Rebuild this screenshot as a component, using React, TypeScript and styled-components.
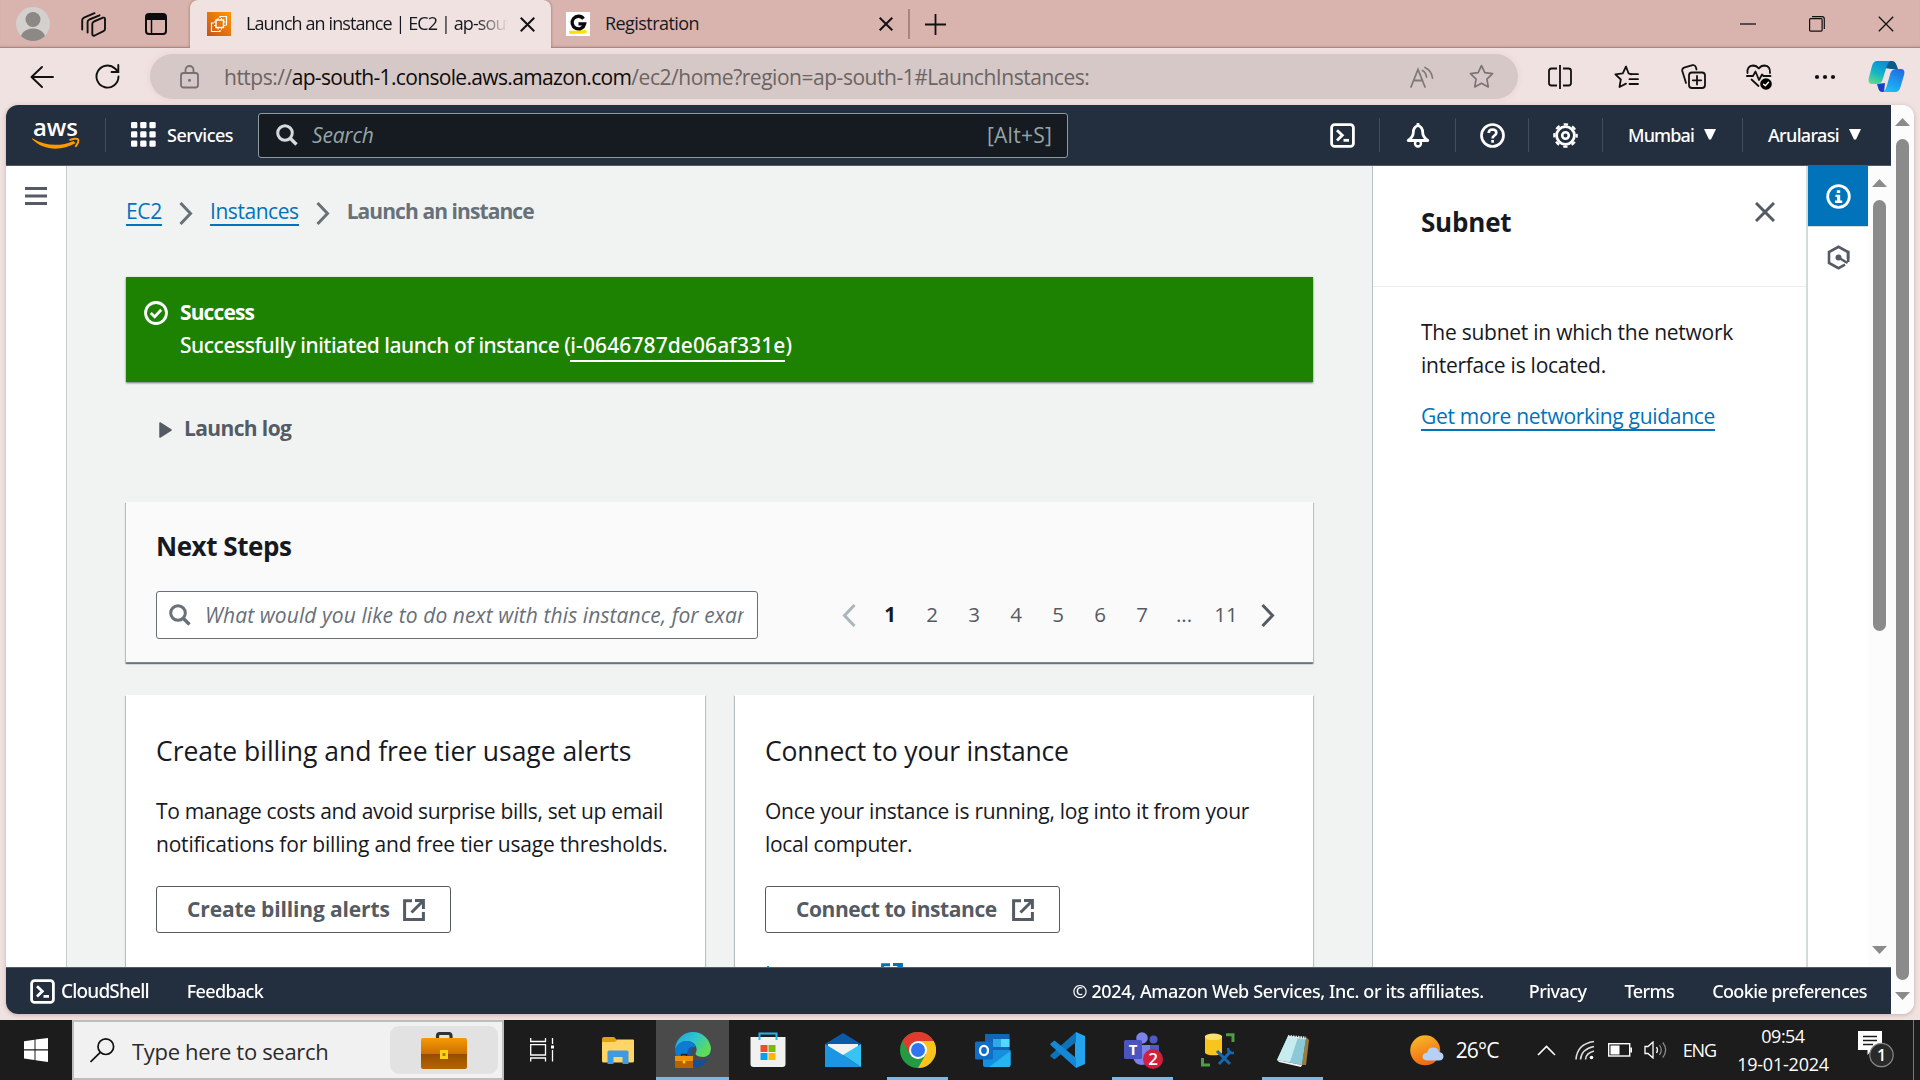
import React from 'react';
import styled, { createGlobalStyle, css } from 'styled-components';

const GlobalStyle = createGlobalStyle`
  * { box-sizing: border-box; }
  html, body { margin: 0; padding: 0; overflow: hidden; }
  body { font-family: 'Open Sans', 'Noto Sans', sans-serif; color: #16191f; }
  svg { display: block; flex: none; }
`;

/* ---------- shared ---------- */

const Text = styled.span<{ $size?: number; $ls?: number }>`
  white-space: nowrap;
  font-size: ${p => p.$size ?? 21}px;
  letter-spacing: ${p => p.$ls ?? 0}px;
`;
const Medium = styled(Text)`
  font-family: 'Noto Sans', sans-serif;
  font-weight: 500;
`;
const Bold = styled(Text)`
  font-weight: 700;
`;
const Spacer = styled.div`
  flex: 1;
`;

const Screen = styled.div`
  width: 1920px;
  height: 1080px;
  display: flex;
  flex-direction: column;
  background: #f0e2e0;
  overflow: hidden;
`;

/* ---------- browser tabs ---------- */

const TabStrip = styled.div`
  height: 48px;
  flex: none;
  display: flex;
  align-items: stretch;
  background: #d9b3ad;
  box-shadow: inset 0 -1px 0 #ab8783, inset 0 -3px 2px -1px #c9a19c;
`;
const StripTools = styled.div`
  width: 190px;
  padding-left: 16px;
  display: flex;
  align-items: center;
`;
const Avatar = styled.div`
  width: 34px;
  height: 34px;
  margin-right: 31px;
  border-radius: 50%;
  overflow: hidden;
  background: #d3d0cd;
`;
const PaneIcon = styled.div`
  margin-left: 39px;
`;
const Tab = styled.div<{ $active?: boolean }>`
  width: ${p => (p.$active ? 361 : 357)}px;
  padding: 0 ${p => (p.$active ? 16 : 15)}px 0 ${p => (p.$active ? 17 : 15)}px;
  display: flex;
  align-items: center;
  ${p => p.$active && css`
    background: #f0e2e0;
    border-radius: 8px 8px 0 0;
    box-shadow: 0 0 3px #8d6e6a;
    clip-path: inset(-4px -4px 0 -4px);
  `}
`;
const TabTitle = styled.div<{ $fade?: boolean }>`
  flex: 1;
  margin: 0 12px 2px 15px;
  overflow: hidden;
  line-height: 26px;
  ${p => p.$fade && css`mask-image: linear-gradient(90deg, #000 88%, transparent 100%);`}
`;
const TabDivider = styled.div`
  width: 2px;
  height: 30px;
  align-self: center;
  background: #a88480;
`;
const NewTab = styled.div`
  padding-left: 15px;
  display: flex;
  align-items: center;
`;
const WindowButton = styled.div`
  width: 69px;
  display: flex;
  align-items: center;
  justify-content: center;
`;

/* ---------- address bar ---------- */

const Toolbar = styled.div`
  height: 57px;
  flex: none;
  display: flex;
  align-items: center;
  padding: 0 13px 0 30px;
`;
const AddressBar = styled.div`
  width: 1368px;
  height: 45px;
  margin-left: 30px;
  padding: 0 10px 0 30px;
  display: flex;
  align-items: center;
  border-radius: 23px;
  background: #d6c8c6;
  box-shadow: 0 0 5px 2px #eadad8;
`;
const Url = styled.div`
  margin-left: 25px;
  flex: 1;
  display: flex;
  color: #6a6463;
`;
const Host = styled(Text)`
  color: #0d0b0b;
`;
const BarIcon = styled.div<{ $w: number }>`
  width: ${p => p.$w}px;
  display: flex;
  justify-content: center;
`;

/* ---------- page ---------- */

const PageFrame = styled.div`
  height: 909px;
  flex: none;
  margin: 0 6px;
  display: flex;
  border-radius: 12px;
  overflow: hidden;
  background: #fcfcfc;
`;
const FrameShadow = styled.div`
  flex: none;
  margin-bottom: 6px;
  filter: drop-shadow(0 1px 2px rgba(120, 80, 80, 0.35));
`;
const Page = styled.div`
  width: 1885px;
  display: flex;
  flex-direction: column;
`;
const ScrollTrack = styled.div<{ $pt: number; $pb: number }>`
  width: 23px;
  padding: ${p => p.$pt}px 0 ${p => p.$pb}px;
  display: flex;
  flex-direction: column;
  align-items: center;
  background: #fcfcfc;
`;
const ScrollThumb = styled.div<{ $h: number }>`
  width: 13px;
  height: ${p => p.$h}px;
  margin-top: 13px;
  border-radius: 7px;
  background: #8b8b8b;
`;

const Header = styled.div`
  height: 61px;
  flex: none;
  display: flex;
  align-items: center;
  background: #232f3e;
  border-bottom: 1px solid #545b64;
  color: #fff;
`;
const LogoCell = styled.div`
  width: 99px;
  padding: 0 0 1px 26px;
`;
const HDivider = styled.div`
  width: 1px;
  height: 34px;
  background: #414d5c;
`;
const ServicesCell = styled.div`
  width: 152px;
  padding: 0 0 1px 25px;
  display: flex;
  align-items: center;
  gap: 11px;
`;
const SearchBox = styled.div`
  width: 810px;
  height: 45px;
  padding: 0 15px 0 17px;
  display: flex;
  align-items: center;
  justify-content: space-between;
  border: 1px solid #8d9ba0;
  border-radius: 3px;
  background: #161a21;
  color: #95a5a6;
`;
const SearchHint = styled.div`
  display: flex;
  align-items: center;
  gap: 14px;
  font-style: italic;
`;
const ToolCell = styled.div<{ $w: number }>`
  width: ${p => p.$w}px;
  display: flex;
  justify-content: center;
`;
const MenuCell = styled.div<{ $w: number }>`
  width: ${p => p.$w}px;
  padding: 0 0 1px 25px;
  display: flex;
  align-items: center;
  gap: 10px;
`;

const Middle = styled.div`
  flex: 1;
  min-height: 0;
  display: flex;
`;
const LeftRail = styled.div`
  width: 61px;
  padding: 21px 0 0 19px;
  background: #fff;
  border-right: 1px solid #c3cbcb;
`;
const Content = styled.div`
  width: 1305px;
  padding: 0 59px;
  overflow: hidden;
  background: #f1f3f3;
  display: flex;
  flex-direction: column;
`;
const Breadcrumb = styled.div`
  height: 111px;
  flex: none;
  padding-top: 31px;
  display: flex;
  align-items: flex-start;
  color: #687078;
`;
const Link = styled(Text)`
  color: #0073bb;
  height: 29px;
  line-height: 28px;
  border-bottom: 2px solid #0073bb;
`;
const Crumb = styled(Bold)`
  line-height: 28px;
`;
const ChevronBox = styled.div`
  margin: 5px 17px 0 17px;
`;
const Alert = styled.div`
  height: 105px;
  flex: none;
  padding: 19px 18px;
  display: flex;
  gap: 12px;
  color: #fff;
  background: #1d8102;
  box-shadow: 0 1px 2px rgba(0, 28, 36, 0.6);
`;
const AlertIcon = styled.div`
  padding-top: 5px;
`;
const AlertBody = styled.div`
  display: flex;
  flex-direction: column;
`;
const AlertLine = styled.div`
  line-height: 33px;
  height: 33px;
  display: flex;
`;
const AlertLink = styled(Medium)`
  line-height: 28px;
  height: 31px;
  margin-top: 2px;
  padding-bottom: 1px;
  border-bottom: 2px solid #fff;
`;
const LaunchLog = styled.div`
  height: 120px;
  flex: none;
  padding: 31px 0 0 33px;
  display: flex;
  gap: 12px;
  line-height: 30px;
  color: #545b64;
`;
const LogTriangle = styled.div`
  padding-top: 9px;
`;
const panelShadow = css`
  box-shadow: 0 1px 1px rgba(0, 28, 36, 0.35), 1px 1px 1px rgba(0, 28, 36, 0.18), -1px 1px 1px rgba(0, 28, 36, 0.2);
`;
const NextSteps = styled.div`
  height: 161px;
  flex: none;
  padding: 26px 30px 0;
  background: #fafafa;
  border-bottom: 1px solid #7f8c8d;
  ${panelShadow}
`;
const SectionTitle = styled.div`
  height: 63px;
  line-height: 36px;
`;
const FilterRow = styled.div`
  display: flex;
  align-items: center;
  justify-content: space-between;
`;
const FilterInput = styled.div`
  width: 602px;
  height: 48px;
  padding: 0 13px 0 12px;
  display: flex;
  align-items: center;
  gap: 14px;
  border: 1px solid #687078;
  border-radius: 3px;
  background: #fff;
  color: #687078;
  font-style: italic;
`;
const Clip = styled.div`
  flex: 1;
  overflow: hidden;
  white-space: nowrap;
`;
const Pagination = styled.div`
  display: flex;
  align-items: center;
  margin-right: 8px;
  color: #545b64;
`;
const PageList = styled.div`
  display: flex;
  margin: 0 14px 0 13px;
`;
const PageNumber = styled.div<{ $current?: boolean }>`
  width: 42px;
  text-align: center;
  font-size: 20.5px;
  padding-bottom: 2px;
  ${p => p.$current && css`font-weight: 700; color: #16191f;`}
`;
const Cards = styled.div`
  margin-top: 32px;
  flex: none;
  height: 400px;
  display: grid;
  grid-template-columns: 579px 578px;
  gap: 30px;
`;
const Card = styled.div`
  padding: 38px 30px 0;
  background: #fff;
  ${panelShadow}
`;
const CardTitle = styled.div`
  height: 62px;
  line-height: 36px;
`;
const CardLine = styled.div`
  height: 33px;
  line-height: 33px;
`;
const OutlineButton = styled.div`
  width: 295px;
  height: 47px;
  margin-top: 25px;
  padding: 0 25px 2px 30px;
  display: flex;
  align-items: center;
  justify-content: space-between;
  border: 1px solid #545b64;
  border-radius: 3px;
  color: #545b64;
`;
const ButtonIcon = styled.div`
  padding-top: 2px;
`;
const LearnMore = styled.div`
  margin-top: 25px;
  display: flex;
  gap: 6px;
  line-height: 33px;
  color: #0073bb;
`;
const LearnIcon = styled.div`
  padding-top: 5px;
`;

const HelpPanel = styled.div`
  width: 436px;
  background: #fff;
  border-left: 1px solid #b8c2c2;
  border-right: 2px solid #d5dbdb;
`;
const HelpHeader = styled.div`
  height: 121px;
  padding: 36px 31px 0 48px;
  display: flex;
  align-items: flex-start;
  justify-content: space-between;
  border-bottom: 1px solid #eaeded;
  line-height: 41px;
`;
const HelpBody = styled.div`
  padding: 29px 0 0 48px;
`;
const HelpLine = styled.div`
  display: flex;
  height: 33px;
  line-height: 33px;
`;
const HelpLink = styled.div`
  margin-top: 20px;
  display: flex;
`;
const IconRail = styled.div`
  width: 60px;
  background: #fff;
`;
const RailTile = styled.div<{ $active?: boolean }>`
  height: 61px;
  display: flex;
  align-items: center;
  justify-content: center;
  border-bottom: 1px solid ${p => (p.$active ? '#d5dbdb' : 'transparent')};
  background: ${p => (p.$active ? '#0073bb' : '#fff')};
`;

const Footer = styled.div`
  height: 47px;
  flex: none;
  padding: 0 24px;
  display: flex;
  align-items: center;
  color: #fff;
  background: #232f3e;
  border-top: 1px solid #545b64;
`;
const FootItem = styled.div<{ $ml: number }>`
  margin-left: ${p => p.$ml}px;
  padding-bottom: 1px;
  display: flex;
  align-items: center;
`;

/* ---------- taskbar ---------- */

const Taskbar = styled.div`
  height: 60px;
  flex: none;
  display: flex;
  align-items: center;
  background: #1c1c1c;
  color: #fff;
`;
const StartButton = styled.div`
  width: 72px;
  display: flex;
  justify-content: center;
`;
const TaskSearch = styled.div`
  width: 432px;
  height: 60px;
  margin-right: 1px;
  padding: 0 4px 0 16px;
  display: flex;
  align-items: center;
  border: 2px solid #bdbdbd;
  background: #f1f1f1;
  color: #2b2b2b;
`;
const TaskSearchText = styled.div`
  flex: 1;
  padding: 2px 0 0 17px;
`;
const SearchPill = styled.div`
  width: 108px;
  height: 48px;
  display: flex;
  justify-content: center;
  align-items: center;
  border-radius: 9px;
  background: #e2e2e2;
`;
const AppSlot = styled.div<{ $active?: boolean; $open?: boolean }>`
  width: 73px;
  height: 60px;
  margin: 0 1px;
  display: flex;
  align-items: center;
  justify-content: center;
  background-color: ${p => (p.$active ? '#4a4a4a' : 'transparent')};
  ${p => p.$open && css`
    background-image: linear-gradient(#76b9ed, #76b9ed);
    background-repeat: no-repeat;
    background-position: bottom center;
    background-size: ${p.$active ? '100%' : '61px'} 3px;
  `}
`;
const TrayItem = styled.div<{ $ml: number }>`
  margin-left: ${p => p.$ml}px;
`;
const Clock = styled.div`
  width: 112px;
  margin-left: 11px;
  display: flex;
  flex-direction: column;
  align-items: center;
  line-height: 28px;
`;
const ShowDesktop = styled.div`
  width: 7px;
  height: 60px;
  border-left: 1px solid #777;
`;

/* ---------- icons ---------- */

const Cross = ({ s, w, c }: { s: number; w: number; c: string }) => (
  <svg width={s} height={s} viewBox="0 0 20 20"><path d="M1 1L19 19M19 1L1 19" stroke={c} strokeWidth={(w * 20) / s} fill="none" /></svg>
);
const Chevron = ({ c, left, w = 3 }: { c: string; left?: boolean; w?: number }) => (
  <svg width="14" height="23" viewBox="0 0 14 23"><path d={left ? 'M12.5 1L2.5 11.5L12.5 22' : 'M1.5 1L11.5 11.5L1.5 22'} fill="none" stroke={c} strokeWidth={w} /></svg>
);
const Arrow = ({ up }: { up?: boolean }) => (
  <svg width="15" height="8" viewBox="0 0 15 8"><path d={up ? 'M0 8L7.5 0L15 8Z' : 'M0 0L7.5 8L15 0Z'} fill="#8b8b8b" /></svg>
);
const Magnifier = ({ c }: { c: string }) => (
  <svg width="22" height="22" viewBox="0 0 22 22" fill="none" stroke={c}><circle cx="9" cy="9" r="7.3" strokeWidth="3" /><path d="M14.2 14.2L20.5 20.5" strokeWidth="3.4" /></svg>
);
const Caret = () => (
  <svg width="12" height="11" viewBox="0 0 12 11"><path d="M0 0H12L7 10.5H5Z" fill="#fff" /></svg>
);
const Shell = () => (
  <svg width="25" height="25" viewBox="0 0 25 25" fill="none" stroke="#fff" strokeWidth="2.8"><rect x="1.6" y="1.6" width="21.8" height="21.8" rx="3" /><path d="M7 7.2L12.3 12.3L7 17.4" /><path d="M13.5 17.3H19" /></svg>
);
const External = ({ c }: { c: string }) => (
  <svg width="22" height="22" viewBox="0 0 22 22" fill="none" stroke={c} strokeWidth="3"><path d="M9 1.7H1.6V20.4H20.4V13" /><path d="M12 1.6H20.4V10" /><path d="M20 2L8.5 13.5" /></svg>
);
const AwsLogo = () => (
  <svg width="48" height="32" viewBox="0 0 48 32">
    <text x="1" y="16.5" fontFamily="Open Sans" fontWeight="600" fontSize="24" textLength="45" lengthAdjust="spacingAndGlyphs" fill="#fff">aws</text>
    <path d="M.3 19.200C13 27 28 28 41.500 22L43.500 24.200C29 32.500 11 31.500 0 20Z" fill="#f90" />
    <path d="M37.500 21.200C41 19.600 45 19.300 46 20.200C47 21.400 46 25 43.300 27.800" fill="none" stroke="#f90" strokeWidth="2" />
  </svg>
);
const Profile = () => (
  <svg width="34" height="34" viewBox="0 0 34 34"><circle cx="17" cy="12.500" r="7.500" fill="#8c8885" /><ellipse cx="17" cy="32" rx="12.500" ry="10.500" fill="#8c8885" /></svg>
);
const Workspaces = () => (
  <svg width="25" height="25" viewBox="0 0 25 25" fill="none" stroke="#111" strokeWidth="1.900" strokeLinejoin="round" strokeLinecap="round">
    <path d="M13 9.500L22 5.700Q24 5.200 24 7V17Q24 18.500 22.500 19.200L13.700 23.500Q11.300 24.200 11.300 22.200V12Q11.300 10.300 13 9.500Z" /><path d="M18.500 3.300L8.400 7.500Q6.600 8.300 6.600 10V20.500" /><path d="M13.500 1.200L3 5.600Q1.200 6.500 1.200 8.200V17.500" />
  </svg>
);
const PaneGlyph = () => (
  <svg width="22" height="22" viewBox="0 0 22 22"><rect x="1" y="1" width="20" height="20" rx="3" fill="none" stroke="#0c0c0c" strokeWidth="2" /><path d="M1 3Q1 1 3 1H19Q21 1 21 3V7H1Z" fill="#0c0c0c" /><path d="M6.500 6V21" stroke="#0c0c0c" strokeWidth="1.500" /></svg>
);
const Ec2Favicon = () => (
  <svg width="24" height="24" viewBox="0 0 24 24" fill="none" stroke="#fff" strokeWidth="1.400">
    <defs><linearGradient id="ec2" x1="0" y1="1" x2="1" y2="0"><stop offset="0" stopColor="#c8511b" /><stop offset="1" stopColor="#f90" /></linearGradient></defs>
    <rect width="24" height="24" fill="url(#ec2)" stroke="none" />
    <rect x="9" y="8" width="7.500" height="7.500" /><path d="M11 8V6M14.500 8V6M11 15.500V17.500M14.500 15.500V17.500M9 10H7M9 13.500H7M16.500 10H18.500M16.500 13.500H18.500" strokeWidth="1.100" />
    <path d="M13 6V4.500H19.500V13H18.500" strokeWidth="1.200" /><path d="M7 11H4.500V19.500H13V18" strokeWidth="1.200" />
  </svg>
);
const GFavicon = () => (
  <svg width="24" height="24" viewBox="0 0 24 24"><rect width="24" height="24" fill="#fff" /><path d="M3 19L20.500 18V21.500L3.500 22Z" fill="#ffe100" /><path d="M17.500 6.800A6.300 6.300 0 1 0 18.600 11.800H12.500" fill="none" stroke="#0a0a0a" strokeWidth="3.300" /></svg>
);
const Back = () => (
  <svg width="24" height="24" viewBox="0 0 24 24" fill="none" stroke="#111" strokeWidth="1.900" strokeLinecap="round" strokeLinejoin="round"><path d="M12 2L1.500 12L12 22M1.500 12H23" /></svg>
);
const Refresh = () => (
  <svg width="25" height="25" viewBox="0 0 25 25" fill="none" stroke="#111" strokeWidth="1.900" strokeLinecap="round"><path d="M23.500 12.500A11 11 0 1 1 20 4.500L23 7.500M23.300 1V8H16.500" /></svg>
);
const Lock = () => (
  <svg width="19" height="24" viewBox="0 0 19 24" fill="none" stroke="#767070" strokeWidth="1.800"><rect x="1" y="8" width="17" height="14.500" rx="2.500" /><path d="M5.500 8V5A4 4 0 0 1 13.500 5V8" /><circle cx="9.500" cy="15.300" r="1.500" fill="#767070" stroke="none" /></svg>
);
const ReadAloud = () => (
  <svg width="24" height="22" viewBox="0 0 24 22" fill="none" stroke="#807a79" strokeWidth="1.800" strokeLinecap="round"><path d="M1 21L8 3.500L15 21M3.500 14.500H12.500" /><path d="M12.500 4.500Q16 6.500 16.500 11M15 1.500Q21.500 4.500 22.500 12" /></svg>
);
const starPath = 'M12 1.500L15.200 8.300L22.600 9.300L17.200 14.500L18.500 22L12 18.400L5.500 22L6.800 14.500L1.400 9.300L8.800 8.300Z';
const Star = () => (
  <svg width="25" height="25" viewBox="0 0 24 24" fill="none" stroke="#7a7473" strokeWidth="1.600" strokeLinejoin="round"><path d={starPath} /></svg>
);
const Split = () => (
  <svg width="24" height="24" viewBox="0 0 24 24" fill="none" stroke="#111" strokeWidth="1.800"><path d="M9 3.500H3.500Q1 3.500 1 6V18Q1 20.500 3.500 20.500H9M15 3.500H20.500Q23 3.500 23 6V18Q23 20.500 20.500 20.500H15M12 0V24" /></svg>
);
const Favorites = () => (
  <svg width="25" height="24" viewBox="0 0 25 24" fill="none" stroke="#111" strokeWidth="1.800" strokeLinejoin="round" strokeLinecap="round"><path d="M17.500 9.300L14.500 8.300L12 1.500L8.800 8.300L1.400 9.300L6.800 14.500L5.500 22L12 18.600" /><path d="M17.500 9.200H24M15.500 14.200H24M15.500 19H24" /></svg>
);
const Collections = () => (
  <svg width="25" height="25" viewBox="0 0 25 25" fill="none" stroke="#111" strokeWidth="1.800" strokeLinecap="round"><rect x="8" y="8.500" width="16" height="15.500" rx="3" /><path d="M16 12V20.500M11.800 16.300H20.200" /><path d="M5 19L1.300 7Q.8 4.500 3 3.700L11.500 1.200Q14 .7 14.800 3L15.500 5.500" /></svg>
);
const Heart = () => (
  <svg width="26" height="26" viewBox="0 0 26 26" fill="none" stroke="#111" strokeWidth="1.800" strokeLinecap="round" strokeLinejoin="round"><path d="M1.500 9Q.8 2 7 1.500Q10.500 1.500 12.800 4.500Q15 1.500 18.500 1.500Q24.500 2 24 9" /><path d="M.8 12H7L9.500 7.500L13 16L16 10.500L17.500 12H24.500" /><path d="M5.500 15.500L12.500 22" /><circle cx="20" cy="20" r="5.800" fill="#000" stroke="none" /><path d="M17.600 20.200L19.300 21.800L22.500 18.300" stroke="#fff" strokeWidth="1.400" /></svg>
);
const Dots = () => (
  <svg width="22" height="6" viewBox="0 0 22 6" fill="#111"><circle cx="3" cy="3" r="2.100" /><circle cx="11" cy="3" r="2.100" /><circle cx="19" cy="3" r="2.100" /></svg>
);
const Copilot = () => (
  <svg width="37" height="33" viewBox="0 0 37 33">
    <defs>
      <linearGradient id="cpA" x1=".6" y1="0" x2=".2" y2="1"><stop offset="0" stopColor="#0a8fd6" /><stop offset=".5" stopColor="#13b4c8" /><stop offset="1" stopColor="#5fdc86" /></linearGradient>
      <linearGradient id="cpB" x1=".7" y1="0" x2=".3" y2="1"><stop offset="0" stopColor="#1f6fe0" /><stop offset="1" stopColor="#1cbdf8" /></linearGradient>
    </defs>
    <path d="M19 1H24Q27 1 28.500 5L30 9H23L17 8Z" fill="#0c5a86" />
    <path d="M9 24L17 23L16 32H14Q11.500 32 10.500 29Z" fill="#1440d0" />
    <path d="M9 1H22Q19.500 3 18.500 7L14.500 20Q13 24 9 24H4Q0 24 .6 19L4 6Q5.500 1 9 1Z" fill="url(#cpA)" />
    <path d="M28 9H33Q37 9 36.300 14L32.500 27Q31 32 27.500 32H15Q17.500 30.500 18.500 27L22.500 13Q24 9 28 9Z" fill="url(#cpB)" />
  </svg>
);
const Grid9 = () => (
  <svg width="25" height="25" viewBox="0 0 25 25" fill="#fff">{[0, 9.2, 18.4].map(y => [0, 9.2, 18.4].map(x => <rect key={`${x}-${y}`} x={x} y={y} width="6.300" height="6.300" rx="1.300" />))}</svg>
);
const Bell = () => (
  <svg width="24" height="25" viewBox="0 0 24 25" fill="none" stroke="#fff" strokeWidth="2.800" strokeLinejoin="round"><path d="M12 2.500Q7.300 4 7.300 9.500Q7.300 14 2.200 17.500H21.800Q16.700 14 16.700 9.500Q16.700 4 12 2.500Z" /><circle cx="12" cy="20.500" r="3" strokeWidth="2.400" /><path d="M12 0V3" /></svg>
);
const Question = () => (
  <svg width="25" height="25" viewBox="0 0 25 25" fill="none" stroke="#fff" strokeWidth="2.700"><circle cx="12.500" cy="12.500" r="11" /><path d="M8.700 10Q8.800 6.500 12.500 6.500Q16.300 6.600 16.300 9.700Q16.300 11.500 14.300 12.600Q12.600 13.500 12.600 15.500" /><path d="M12.600 17V19.700" /></svg>
);
const Gear = () => (
  <svg width="25" height="25" viewBox="0 0 25 25" fill="none" stroke="#fff"><circle cx="12.500" cy="12.500" r="8.900" strokeWidth="2.800" /><circle cx="12.500" cy="12.500" r="11.200" strokeWidth="2.200" strokeDasharray="4.400 4.400" strokeDashoffset="2.200" /><circle cx="12.500" cy="12.500" r="3.300" strokeWidth="2.600" /></svg>
);
const Burger = () => (
  <svg width="22" height="18" viewBox="0 0 22 18"><path d="M0 1.500H22M0 9H22M0 16.500H22" stroke="#545b64" strokeWidth="3" /></svg>
);
const Check = () => (
  <svg width="24" height="24" viewBox="0 0 24 24" fill="none" stroke="#fff" strokeWidth="2.800"><circle cx="12" cy="12" r="10.500" /><path d="M6.800 12L10.700 15.700L17.200 8.800" /></svg>
);
const Info = () => (
  <svg width="25" height="25" viewBox="0 0 25 25" fill="none" stroke="#fff" strokeWidth="2.800"><circle cx="12.500" cy="12.500" r="10.800" /><path d="M10.800 6.300H14.200V9H10.800Z" fill="#fff" stroke="none" /><path d="M9.500 10.700H14.200V16.500H16.200V19H9V16.500H11V13H9.500Z" fill="#fff" stroke="none" /></svg>
);
const Hex = () => (
  <svg width="23" height="25" viewBox="0 0 23 25" fill="none" stroke="#545b64" strokeWidth="2.600"><path d="M21 14V7L11.500 1.800L2 7V18L11.500 23.200L18 19.700" /><path d="M21.200 5.800V17" /><circle cx="11.500" cy="12.500" r="3" fill="#545b64" stroke="none" /><path d="M11.500 12.500L20.500 18" /></svg>
);
const Triangle = () => (
  <svg width="13" height="16" viewBox="0 0 13 16"><path d="M1 1L12 8L1 15Z" fill="#545b64" stroke="#545b64" strokeWidth="1.500" strokeLinejoin="round" /></svg>
);

const Windows = () => (
  <svg width="24" height="24" viewBox="0 0 24 24" fill="#fff"><path d="M0 3.300L10.500 1.800V11.300H0ZM11.500 1.600L24 0V11.300H11.500ZM0 12.400H10.500V22L0 20.600ZM11.500 12.400H24V24L11.500 22.300Z" /></svg>
);
const TaskMagnifier = () => (
  <svg width="25" height="25" viewBox="0 0 25 25" fill="none" stroke="#111" strokeWidth="1.700"><circle cx="15.800" cy="8.700" r="7.800" /><path d="M10.300 14.300L.5 24" /></svg>
);
const Briefcase = ({ w, h }: { w: number; h: number }) => (
  <svg width={w} height={h} viewBox="0 0 46 37">
    <defs><linearGradient id="bcTop" x1="0" y1="0" x2="0" y2="1"><stop offset="0" stopColor="#f79a05" /><stop offset="1" stopColor="#cb6f00" /></linearGradient><linearGradient id="bcLow" x1="0" y1="0" x2="0" y2="1"><stop offset="0" stopColor="#8a4800" /><stop offset="1" stopColor="#b86400" /></linearGradient></defs>
    <path d="M16.500 7V4Q16.500 1.500 19 1.500H27.500Q30 1.500 30 4V7" fill="none" stroke="#333" strokeWidth="3.200" />
    <rect x="0" y="18" width="46" height="19" rx="2" fill="url(#bcLow)" /><path d="M0 8Q0 6 2 6H44Q46 6 46 8V22H0Z" fill="url(#bcTop)" />
    <rect x="19" y="18" width="8" height="9" fill="#ffd21a" /><rect x="21.500" y="21" width="3" height="3" fill="#ad7e00" />
  </svg>
);
const TaskView = () => (
  <svg width="25" height="24" viewBox="0 0 25 24" fill="none" stroke="#fff" strokeWidth="1.300"><path d="M.7 0V3.500H15.500V0M.7 6.700H15.500V17H.7ZM.7 23.500V20H15.500V23.500M22.500 0V6M22.500 12V23.500" /><rect x="21" y="7.500" width="3" height="3" fill="#fff" stroke="none" /></svg>
);
const Folder = () => (
  <svg width="32" height="27" viewBox="0 0 32 27"><path d="M0 2Q0 0 2 0H12L14.500 2.500V8H0Z" fill="#e0a010" /><path d="M0 5H13L15 2.500H31Q32 2.500 32 3.500V24Q32 25.500 30.500 25.500H1.500Q0 25.500 0 24Z" fill="#ffd567" /><path d="M5.500 27V15Q5.500 13.500 7 13.500H25Q26.500 13.500 26.500 15V27H20.500V20H11.500V27Z" fill="#3f9ae0" /></svg>
);
const EdgeIcon = () => (
  <svg width="36" height="36" viewBox="0 0 36 36">
    <defs><linearGradient id="edA" x1="0" y1="0" x2="1" y2=".6"><stop offset="0" stopColor="#1e9fe0" /><stop offset=".5" stopColor="#2fc4cf" /><stop offset="1" stopColor="#62dd4f" /></linearGradient></defs>
    <circle cx="18" cy="18" r="17.500" fill="#1b57a8" />
    <path d="M18 0A18 18 0 0 0 0 17Q5 8 14 9Q22 11 21 18Q19 23 23 25Q35 27 36 17A18 18 0 0 0 18 0Z" fill="url(#edA)" />
    <path d="M0 18Q3 9 12 9Q20 9.500 21 16Q14 12 12 21Q11 30 22 35.500A18 18 0 0 1 0 18Z" fill="#0f7bd0" />
    <path d="M20.500 14Q23 18 20 22Q23 26 34 24.500L37 20V28L33 28Q24 31 19 27Q12 20 20.500 14Z" fill="#4a4a4a" />
    <path d="M12.500 20Q13 27 21 28.500Q28 29.500 33.500 26.500Q28 36 19 36Q12 30 12.500 20Z" fill="#174e9a" />
    <rect x="0" y="24" width="18" height="12" rx="1" fill="#b86300" /><rect x="0" y="24" width="18" height="5" fill="#ee9108" /><rect x="7.800" y="28.500" width="2.500" height="2.800" fill="#ffd800" /><path d="M6.500 24V22.500H11.500V24" stroke="#222" fill="none" strokeWidth="1.300" />
  </svg>
);
const Store = () => (
  <svg width="36" height="36" viewBox="0 0 36 36"><path d="M.5 5H35.500V32Q35.500 35 32.500 35H3.500Q.5 35 .5 32Z" fill="#f1f1f1" /><path d="M9.500 8V1.500H26.500V8" fill="none" stroke="#23b5f0" strokeWidth="2" /><rect x="10.500" y="13" width="7" height="7" fill="#f04f23" /><rect x="18.500" y="13" width="7" height="7" fill="#7fba00" /><rect x="10.500" y="21" width="7" height="7" fill="#00a3ee" /><rect x="18.500" y="21" width="7" height="7" fill="#feb800" /></svg>
);
const Mail = () => (
  <svg width="36" height="34" viewBox="0 0 36 34"><path d="M0 11L18 0L36 11V16H0Z" fill="#0a5aa8" /><path d="M3 11H33V22H3Z" fill="#f2f2f2" /><path d="M0 11L18 22L36 34H0Z" fill="#1c96e2" /><path d="M36 11L18 22L36 34Z" fill="#36c5f3" /></svg>
);
const Chrome = () => (
  <svg width="36" height="36" viewBox="0 0 36 36"><circle cx="18" cy="18" r="18" fill="#259a45" /><path d="M18 9H33.600A18 18 0 0 1 18 36L25.800 22.500Z" fill="#fcc31c" /><path d="M10.200 22.500L2.400 9A18 18 0 0 1 33.600 9H18Z" fill="#e23b2e" /><circle cx="18" cy="18" r="9" fill="#fff" /><circle cx="18" cy="18" r="7" fill="#2f76ee" /></svg>
);
const Outlook = () => (
  <svg width="36" height="33" viewBox="0 0 36 33"><rect x="10" y="0" width="24.500" height="20" fill="#1066b5" /><rect x="18" y="5" width="8" height="8" fill="#32a9e7" /><rect x="26" y="5" width="8.500" height="8" fill="#50d9ff" /><path d="M8 16H35.500V31Q35.500 33 33.500 33H10Q8 33 8 31Z" fill="#1490df" /><path d="M35.500 17L14 33H33.500Q35.500 33 35.500 31Z" fill="#28b4f0" /><rect x="0" y="7.500" width="18" height="18" rx="1.500" fill="#0f6fc6" /><ellipse cx="9" cy="16.500" rx="4" ry="4.600" fill="none" stroke="#fff" strokeWidth="2.300" /></svg>
);
const VsCode = () => (
  <svg width="36" height="36" viewBox="0 0 36 36"><path d="M26 0L35 4V32L26 36L25 27V9Z" fill="#24a4ef" /><path d="M26 0V10L4.500 27.500L.5 24.500V23Z" fill="#0d72b8" /><path d="M26 36V26L4.500 8.500L.5 11.500V13Z" fill="#1488d4" /></svg>
);
const Teams = () => (
  <svg width="40" height="38" viewBox="0 0 40 38"><circle cx="19" cy="7" r="5.800" fill="#7b83eb" /><circle cx="30.500" cy="8.500" r="4" fill="#5059c9" /><path d="M25 14H36V24Q35 29 30 29H25Z" fill="#5059c9" /><path d="M10 14H27V26Q26 34 18.500 34Q11 33 10 26Z" fill="#7b83eb" /><rect x="1" y="9" width="18" height="19" rx="1.500" fill="#4b53bc" /><text x="10" y="24" textAnchor="middle" fontFamily="Open Sans" fontWeight="700" fontSize="15" fill="#fff">T</text><circle cx="30" cy="28" r="10" fill="#d11f3c" /><text x="30" y="34" textAnchor="middle" fontFamily="Open Sans" fontWeight="600" fontSize="17" fill="#fff">2</text></svg>
);
const SqlTool = () => (
  <svg width="34" height="34" viewBox="0 0 34 34"><path d="M4 3V20A9 3.500 0 0 0 21 20V3Z" fill="#f8c51e" /><ellipse cx="12.500" cy="3.800" rx="8.700" ry="3.300" fill="#ffe06b" /><path d="M25 1.800H32V9M1.500 25V32H9" fill="none" stroke="#4a9d46" strokeWidth="3" /><path d="M18 31L30 18M16 18L29 31" stroke="#1668ad" strokeWidth="3" /><path d="M27 15L28 20L33 20" fill="none" stroke="#1668ad" strokeWidth="2.500" /></svg>
);
const Notepad = () => (
  <svg width="34" height="34" viewBox="0 0 34 34"><path d="M30 4L33 7L30 32L26 32Z" fill="#9b7a3c" /><path d="M12 3L30 5L26 32L1 27Z" fill="#8cc9d6" /><path d="M12 3L22 4L14 29L1 27Z" fill="#c6ecf0" /><path d="M1 27L26 32L25 34L3 29Z" fill="#f4f4f4" /><path d="M12 3.500L30 5" stroke="#e9e9e9" strokeWidth="3" strokeDasharray="1.500 1" /></svg>
);
const Weather = () => (
  <svg width="34" height="31" viewBox="0 0 34 31"><defs><linearGradient id="sun" x1="0" y1="0" x2=".4" y2="1"><stop offset="0" stopColor="#f6c12c" /><stop offset="1" stopColor="#f26a10" /></linearGradient></defs><circle cx="15.200" cy="15.300" r="15" fill="url(#sun)" /><path d="M17 25.500Q12.500 25 12.500 21.500Q12.800 18 17 17.800Q18.500 12 24 12.500Q28.500 13 29 17Q33.500 17.500 33.500 21.500Q33.200 25.500 29 25.500Z" fill="#b6d0f7" /></svg>
);
const Wifi = () => (
  <svg width="20" height="20" viewBox="0 0 20 20" fill="none" stroke="#ddd" strokeWidth="1.600"><path d="M1 19.500Q2 4 19 1.500M5.500 19.500Q6.500 9 19 6.500M10.500 19.500Q11 13 19 11" /><circle cx="16.500" cy="17.500" r="1.800" fill="#fff" stroke="none" /></svg>
);
const Battery = () => (
  <svg width="24" height="14" viewBox="0 0 24 14"><rect x=".7" y=".7" width="21" height="12.300" fill="none" stroke="#fff" strokeWidth="1.400" /><rect x="2.500" y="2.500" width="9" height="9" fill="#fff" /><rect x="22.300" y="4.500" width="1.700" height="5" fill="#fff" /></svg>
);
const Speaker = () => (
  <svg width="24" height="18" viewBox="0 0 24 18" fill="none" stroke="#fff" strokeWidth="1.300"><path d="M1 5.500H4L9 1V17L4 12.500H1Z" /><path d="M12.500 6Q14.500 9 12.500 12" /><path d="M15.500 4Q19 9 15.500 14M18.800 1.500Q24.500 9 18.800 16.500" stroke="#888" /></svg>
);
const Notifications = () => (
  <svg width="38" height="38" viewBox="0 0 38 38"><path d="M0 0H24V19H14L9.500 24V19H0Z" fill="#fff" /><path d="M5 5.500H19M5 9.500H19M5 13.500H15" stroke="#1c1c1c" strokeWidth="1.300" /><circle cx="23.500" cy="24" r="11.700" fill="#2a2a2a" stroke="#8a8a8a" strokeWidth="1.200" /><text x="23.500" y="30" textAnchor="middle" fontFamily="Open Sans" fontWeight="600" fontSize="16" fill="#fff">1</text></svg>
);

/* ---------- sections ---------- */

const BrowserTabs = () => (
  <TabStrip>
    <StripTools>
      <Avatar><Profile /></Avatar>
      <Workspaces />
      <PaneIcon><PaneGlyph /></PaneIcon>
    </StripTools>
    <Tab $active>
      <Ec2Favicon />
      <TabTitle $fade><Text $size={18} $ls={-0.9}>Launch an instance | EC2 | ap-south-1</Text></TabTitle>
      <Cross s={15} w={2} c="#111" />
    </Tab>
    <Tab>
      <GFavicon />
      <TabTitle><Text $size={18} $ls={-0.56}>Registration</Text></TabTitle>
      <Cross s={14} w={2} c="#111" />
    </Tab>
    <TabDivider />
    <NewTab><svg width="21" height="21" viewBox="0 0 21 21"><path d="M10.500 0V21M0 10.500H21" stroke="#111" strokeWidth="1.800" /></svg></NewTab>
    <Spacer />
    <WindowButton><svg width="16" height="2" viewBox="0 0 16 2"><path d="M0 1H16" stroke="#111" strokeWidth="1.300" /></svg></WindowButton>
    <WindowButton><svg width="16" height="16" viewBox="0 0 16 16" fill="none" stroke="#111" strokeWidth="1.200"><rect x=".6" y="2.600" width="12.500" height="12.500" rx="1" /><path d="M3 .7H13Q15.300 .7 15.300 3V13" /></svg></WindowButton>
    <WindowButton><Cross s={16} w={1.3} c="#111" /></WindowButton>
  </TabStrip>
);

const AddressRow = () => (
  <Toolbar>
    <BarIcon $w={24}><Back /></BarIcon>
    <Spacer />
    <BarIcon $w={25}><Refresh /></BarIcon>
    <AddressBar>
      <Lock />
      <Url>
        <Text $ls={-0.5}>https://</Text>
        <Host $ls={-0.66}>ap-south-1.console.aws.amazon.com</Host>
        <Text $ls={-0.47}>/ec2/home?region=ap-south-1#LaunchInstances:</Text>
      </Url>
      <BarIcon $w={65}><ReadAloud /></BarIcon>
      <BarIcon $w={54}><Star /></BarIcon>
    </AddressBar>
    <BarIcon $w={83}><Split /></BarIcon>
    <BarIcon $w={51}><Favorites /></BarIcon>
    <BarIcon $w={82}><Collections /></BarIcon>
    <BarIcon $w={49}><Heart /></BarIcon>
    <BarIcon $w={83}><Dots /></BarIcon>
    <BarIcon $w={41}><Copilot /></BarIcon>
  </Toolbar>
);

const AwsHeader = () => (
  <Header>
    <LogoCell><AwsLogo /></LogoCell>
    <HDivider />
    <ServicesCell><Grid9 /><Medium $size={18} $ls={-0.5}>Services</Medium></ServicesCell>
    <SearchBox>
      <SearchHint><Magnifier c="#d5dbdb" /><Text $ls={-0.2}>Search</Text></SearchHint>
      <Text $ls={0.24}>[Alt+S]</Text>
    </SearchBox>
    <Spacer />
    <ToolCell $w={73}><Shell /></ToolCell>
    <HDivider /><ToolCell $w={75}><Bell /></ToolCell>
    <HDivider /><ToolCell $w={72}><Question /></ToolCell>
    <HDivider /><ToolCell $w={73}><Gear /></ToolCell>
    <HDivider /><MenuCell $w={139}><Medium $size={18} $ls={-0.86}>Mumbai</Medium><Caret /></MenuCell>
    <HDivider /><MenuCell $w={148}><Medium $size={18} $ls={-0.67}>Arularasi</Medium><Caret /></MenuCell>
  </Header>
);

const pages = ['1', '2', '3', '4', '5', '6', '7', '...', '11'];

const Main = () => (
  <Content>
    <Breadcrumb>
      <Link $ls={-0.3}>EC2</Link>
      <ChevronBox><Chevron c="#687078" /></ChevronBox>
      <Link $ls={-0.45}>Instances</Link>
      <ChevronBox><Chevron c="#687078" /></ChevronBox>
      <Crumb $ls={-0.92}>Launch an instance</Crumb>
    </Breadcrumb>
    <Alert>
      <AlertIcon><Check /></AlertIcon>
      <AlertBody>
        <AlertLine><Bold $ls={-0.89}>Success</Bold></AlertLine>
        <AlertLine>
          <Medium $ls={-0.47}>Successfully initiated launch of instance (</Medium>
          <AlertLink $ls={0.1}>i-0646787de06af331e</AlertLink>
          <Medium>)</Medium>
        </AlertLine>
      </AlertBody>
    </Alert>
    <LaunchLog><LogTriangle><Triangle /></LogTriangle><Bold $ls={-0.62}>Launch log</Bold></LaunchLog>
    <NextSteps>
      <SectionTitle><Bold $size={26} $ls={-0.45}>Next Steps</Bold></SectionTitle>
      <FilterRow>
        <FilterInput>
          <Magnifier c="#687078" />
          <Clip><Text $ls={0.09}>What would you like to do next with this instance, for example</Text></Clip>
        </FilterInput>
        <Pagination>
          <Chevron c="#aab7b8" left />
          <PageList>
            {pages.map(p => <PageNumber key={p} $current={p === '1'}>{p}</PageNumber>)}
          </PageList>
          <Chevron c="#545b64" />
        </Pagination>
      </FilterRow>
    </NextSteps>
    <Cards>
      <Card>
        <CardTitle><Text $size={26.5} $ls={-0.04}>Create billing and free tier usage alerts</Text></CardTitle>
        <CardLine><Text $ls={-0.34}>To manage costs and avoid surprise bills, set up email</Text></CardLine>
        <CardLine><Text $ls={-0.2}>notifications for billing and free tier usage thresholds.</Text></CardLine>
        <OutlineButton><Bold $ls={-0.14}>Create billing alerts</Bold><ButtonIcon><External c="#545b64" /></ButtonIcon></OutlineButton>
      </Card>
      <Card>
        <CardTitle><Text $size={26.5} $ls={-0.18}>Connect to your instance</Text></CardTitle>
        <CardLine><Text $ls={-0.25}>Once your instance is running, log into it from your</Text></CardLine>
        <CardLine><Text $ls={-0.3}>local computer.</Text></CardLine>
        <OutlineButton><Bold $ls={-0.42}>Connect to instance</Bold><ButtonIcon><External c="#545b64" /></ButtonIcon></OutlineButton>
        <LearnMore><Text $ls={-0.4}>Learn more</Text><LearnIcon><External c="#0073bb" /></LearnIcon></LearnMore>
      </Card>
    </Cards>
  </Content>
);

const Help = () => (
  <HelpPanel>
    <HelpHeader><Bold $size={26} $ls={-0.2}>Subnet</Bold><Cross s={20} w={3} c="#545b64" /></HelpHeader>
    <HelpBody>
      <HelpLine><Text $ls={-0.25}>The subnet in which the network</Text></HelpLine>
      <HelpLine><Text $ls={-0.25}>interface is located.</Text></HelpLine>
      <HelpLink><Link $ls={-0.3}>Get more networking guidance</Link></HelpLink>
    </HelpBody>
  </HelpPanel>
);

const PageFooter = () => (
  <Footer>
    <Shell />
    <FootItem $ml={6}><Medium $size={19} $ls={-0.83}>CloudShell</Medium></FootItem>
    <FootItem $ml={38}><Medium $size={18} $ls={-0.66}>Feedback</Medium></FootItem>
    <Spacer />
    <FootItem $ml={0}><Medium $size={18} $ls={-0.38}>© 2024, Amazon Web Services, Inc. or its affiliates.</Medium></FootItem>
    <FootItem $ml={45}><Medium $size={18} $ls={-0.55}>Privacy</Medium></FootItem>
    <FootItem $ml={38}><Medium $size={18} $ls={-0.6}>Terms</Medium></FootItem>
    <FootItem $ml={38}><Medium $size={18} $ls={-0.6}>Cookie preferences</Medium></FootItem>
  </Footer>
);

const WindowsTaskbar = () => (
  <Taskbar>
    <StartButton><Windows /></StartButton>
    <TaskSearch>
      <TaskMagnifier />
      <TaskSearchText><Text $size={22} $ls={-0.32}>Type here to search</Text></TaskSearchText>
      <SearchPill><Briefcase w={46} h={37} /></SearchPill>
    </TaskSearch>
    <AppSlot><TaskView /></AppSlot>
    <AppSlot><Folder /></AppSlot>
    <AppSlot $active $open><EdgeIcon /></AppSlot>
    <AppSlot><Store /></AppSlot>
    <AppSlot><Mail /></AppSlot>
    <AppSlot $open><Chrome /></AppSlot>
    <AppSlot><Outlook /></AppSlot>
    <AppSlot><VsCode /></AppSlot>
    <AppSlot $open><Teams /></AppSlot>
    <AppSlot><SqlTool /></AppSlot>
    <AppSlot $open><Notepad /></AppSlot>
    <Spacer />
    <Weather />
    <TrayItem $ml={12}><Text $size={21} $ls={-0.81}>26°C</Text></TrayItem>
    <TrayItem $ml={38}><svg width="19" height="11" viewBox="0 0 19 11"><path d="M1 10L9.500 1.500L18 10" fill="none" stroke="#fff" strokeWidth="1.600" /></svg></TrayItem>
    <TrayItem $ml={19}><Wifi /></TrayItem>
    <TrayItem $ml={13}><Battery /></TrayItem>
    <TrayItem $ml={12}><Speaker /></TrayItem>
    <TrayItem $ml={15}><Text $size={18} $ls={-1.1}>ENG</Text></TrayItem>
    <Clock>
      <Text $size={18} $ls={-0.52}>09:54</Text>
      <Text $size={18} $ls={-0.22}>19-01-2024</Text>
    </Clock>
    <TrayItem $ml={19}><Notifications /></TrayItem>
    <TrayItem $ml={17}><ShowDesktop /></TrayItem>
  </Taskbar>
);

export default function App() {
  return (
    <Screen>
      <GlobalStyle />
      <BrowserTabs />
      <AddressRow />
      <FrameShadow>
        <PageFrame>
          <Page>
            <AwsHeader />
            <Middle>
              <LeftRail><Burger /></LeftRail>
              <Main />
              <Help />
              <IconRail>
                <RailTile $active><Info /></RailTile>
                <RailTile><Hex /></RailTile>
              </IconRail>
              <ScrollTrack $pt={13} $pb={13}>
                <Arrow up />
                <ScrollThumb $h={431} />
                <Spacer />
                <Arrow />
              </ScrollTrack>
            </Middle>
            <PageFooter />
          </Page>
          <ScrollTrack $pt={13} $pb={14}>
            <Arrow up />
            <ScrollThumb $h={841} />
            <Spacer />
            <Arrow />
          </ScrollTrack>
        </PageFrame>
      </FrameShadow>
      <WindowsTaskbar />
    </Screen>
  );
}
